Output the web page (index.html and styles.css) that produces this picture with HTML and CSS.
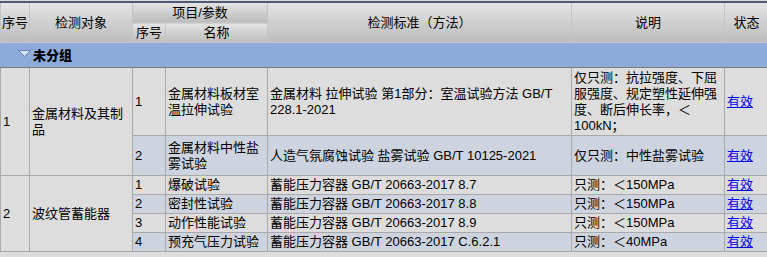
FILE: index.html
```html
<!DOCTYPE html>
<html lang="zh-CN">
<head>
<meta charset="utf-8">
<title>检测能力</title>
<link rel="stylesheet" href="styles.css">
</head>
<body>
<div class="page">
<table class="grid">
  <colgroup>
    <col class="c-no"><col class="c-obj"><col class="c-sub"><col class="c-name"><col class="c-std"><col class="c-desc"><col class="c-state">
  </colgroup>
  <thead>
    <tr class="hr1">
      <th rowspan="2">序号</th>
      <th rowspan="2">检测对象</th>
      <th colspan="2">项目/参数</th>
      <th rowspan="2">检测标准（方法）</th>
      <th rowspan="2">说明</th>
      <th rowspan="2">状态</th>
    </tr>
    <tr class="hr2">
      <th>序号</th>
      <th>名称</th>
    </tr>
  </thead>
  <tbody>
    <tr class="group">
      <td colspan="7"><span class="toggle"><svg width="13" height="7" viewBox="0 0 13 7"><polygon points="0.5,0.5 12.5,0.5 6.5,6.5" fill="#d4e3f6" stroke="#5f83bd" stroke-width="1"/></svg></span><b>未分组</b></td>
    </tr>
    <tr class="row-a h4">
      <td rowspan="2" class="span">1</td>
      <td rowspan="2" class="span">金属材料及其制品</td>
      <td>1</td>
      <td>金属材料板材室温拉伸试验</td>
      <td>金属材料 拉伸试验 第1部分：室温试验方法 GB/T 228.1-2021</td>
      <td>仅只测：抗拉强度、下屈服强度、规定塑性延伸强度、断后伸长率，＜100kN；</td>
      <td><a href="#">有效</a></td>
    </tr>
    <tr class="row-b h2">
      <td>2</td>
      <td>金属材料中性盐雾试验</td>
      <td>人造气氛腐蚀试验 盐雾试验 GB/T 10125-2021</td>
      <td>仅只测：中性盐雾试验</td>
      <td><a href="#">有效</a></td>
    </tr>
    <tr class="row-a">
      <td rowspan="4" class="span">2</td>
      <td rowspan="4" class="span">波纹管蓄能器</td>
      <td>1</td>
      <td>爆破试验</td>
      <td>蓄能压力容器 GB/T 20663-2017 8.7</td>
      <td>只测：＜150MPa</td>
      <td><a href="#">有效</a></td>
    </tr>
    <tr class="row-b">
      <td>2</td>
      <td>密封性试验</td>
      <td>蓄能压力容器 GB/T 20663-2017 8.8</td>
      <td>只测：＜150MPa</td>
      <td><a href="#">有效</a></td>
    </tr>
    <tr class="row-a">
      <td>3</td>
      <td>动作性能试验</td>
      <td>蓄能压力容器 GB/T 20663-2017 8.9</td>
      <td>只测：＜150MPa</td>
      <td><a href="#">有效</a></td>
    </tr>
    <tr class="row-b">
      <td>4</td>
      <td>预充气压力试验</td>
      <td>蓄能压力容器 GB/T 20663-2017 C.6.2.1</td>
      <td>只测：＜40MPa</td>
      <td><a href="#">有效</a></td>
    </tr>
  </tbody>
</table>
</div>
</body>
</html>
```

FILE: styles.css
```css
html, body {
  margin: 0;
  padding: 0;
  overflow: hidden;
  background: #dcdcdc;
}

body {
  font-family: "Liberation Sans", "Noto Sans CJK SC", sans-serif;
  font-size: 13px;
  line-height: 16px;
  color: #000;
}

.page {
  padding-top: 1px;
  width: 800px;
}

.grid {
  border-collapse: collapse;
  table-layout: fixed;
  width: 768px;
  border-top: 2px solid #4b5a78;
}

.c-no { width: 29px; }
.c-obj { width: 103px; }
.c-sub { width: 33px; }
.c-name { width: 102px; }
.c-std { width: 304px; }
.c-desc { width: 153px; }
.c-state { width: 44px; }

.grid th,
.grid td {
  border: 1px solid #a9a9a9;
  vertical-align: middle;
  padding: 1px 2px 1px 2px;
  overflow: hidden;
}

.grid th {
  font-weight: normal;
  text-align: center;
  background: linear-gradient(#e4e4e4, #bcbcbc);
  border-color: #c4c4c4;
  padding: 2px 1px 1px 1px;
}

.hr1 th,
.hr2 th {
  height: 16px;
}

.group td {
  background: #8eaadb;
  height: 22px;
  border-left-color: #8eaadb;
  border-right-color: #8eaadb;
  border-bottom: 1px solid #7d7d7d;
  padding: 2px 2px 0 17px;
  font-weight: bold;
}

.toggle {
  display: inline-block;
  width: 15px;
  vertical-align: 3px;
}

.toggle svg {
  display: block;
}

.row-a td { background: #dddddd; }
.row-b td { background: #cdd4df; }
.grid td.span { background: #dddddd; }

.h4 td { height: 65px; }
.h2 td { height: 37px; }

.grid a {
  color: #0000ee;
  text-decoration: underline;
}
```
